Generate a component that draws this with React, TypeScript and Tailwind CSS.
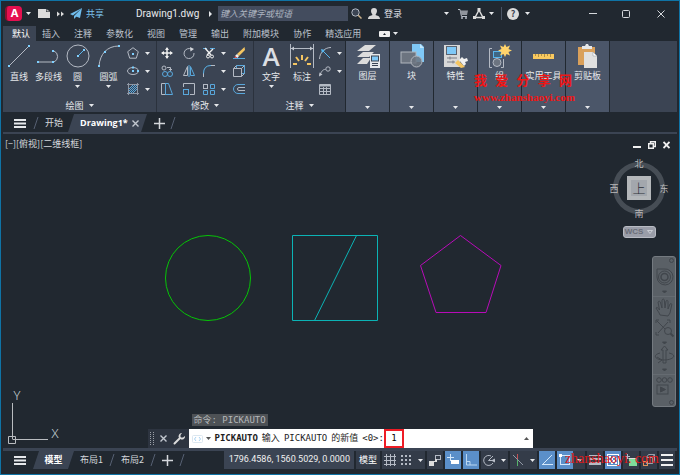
import React from 'react';

const RIBBON_TABS = ['插入', '注释', '参数化', '视图', '管理', '输出', '附加模块', '协作', '精选应用'];

const Caret: React.FC<{ className?: string }> = ({ className = '' }) => (
  <svg width="5" height="3" viewBox="0 0 5 3" className={`shrink-0 fill-[#e6e8eb] ${className}`}>
    <path d="M0 0h5L2.5 3z" />
  </svg>
);

const IconButton: React.FC<{ label: string; className?: string; children: React.ReactNode }> = ({
  label,
  className = '',
  children,
}) => (
  <button type="button" aria-label={label} className={`flex shrink-0 items-center justify-center ${className}`}>
    {children}
  </button>
);

const Icon: React.FC<{ w?: number; h?: number; children: React.ReactNode }> = ({ w = 12, h = 12, children }) => (
  <svg width={w} height={h} viewBox={`0 0 ${w} ${h}`} fill="none" stroke="#b4bac4" className="shrink-0">
    {children}
  </svg>
);

const Slash = () => (
  <svg width="6" height="12" viewBox="0 0 6 12" stroke="#566072" className="shrink-0">
    <path d="M1 12L5 0" />
  </svg>
);

const Bars = () => (
  <svg width="12" height="9" viewBox="0 0 12 9" fill="#e6e8eb">
    <path d="M0 0h12v2H0zM0 3.5h12v2H0zM0 7h12v2H0z" />
  </svg>
);

const Plus = () => (
  <svg width="11" height="11" viewBox="0 0 11 11" stroke="#d5d8dc" strokeWidth="1.5">
    <path d="M5.5 0v11M0 5.5h11" />
  </svg>
);

const Cross = () => (
  <svg width="7" height="7" viewBox="0 0 7 7" stroke="#c3c8d0" strokeWidth="1.4">
    <path d="M.5.5l6 6M6.5.5l-6 6" />
  </svg>
);

const TitleBar = () => (
  <header className="flex h-[25px] items-center pl-1 text-[9px]">
    <button type="button" aria-label="应用程序菜单" className="flex shrink-0 items-center">
      <span className="flex h-[15px] w-[17px] items-center justify-center rounded-sm border-l-2 border-[#8c0f2d] bg-[#e51050] font-['Inter'] text-[11px] font-bold text-white">
        A
      </span>
      <span className="flex w-3 justify-center">
        <Caret />
      </span>
    </button>
    <IconButton label="新建" className="w-5">
      <Icon w={12} h={9}>
        <path d="M0 0h8v3h4v6H0z" fill="#dcdcdc" stroke="none" />
        <path d="M8.500 0L12 2.500H8.500z" fill="#b5b5b5" stroke="none" />
      </Icon>
    </IconButton>
    <IconButton label="更多" className="w-3">
      <Icon w={7} h={6}>
        <path d="M0 .5L3 3 0 5.500zM4 .5L7 3 4 5.500z" fill="#dcdcdc" stroke="none" />
      </Icon>
    </IconButton>
    <button type="button" className="ml-1 flex shrink-0 items-center gap-1 text-[#7cc3ee]">
      <Icon w={12} h={11}>
        <path d="M12 0L0 6l3 1.500zM12 0L4 8v3l2-2zM12 0L6 8.500l4 1.500z" fill="#6fbcec" stroke="none" />
      </Icon>
      共享
    </button>
    <h1 className="ml-8 w-[66px] shrink-0 whitespace-nowrap font-['Roboto'] text-[10px] text-[#e8eaed]">Drawing1.dwg</h1>
    <IconButton label="展开搜索" className="w-4">
      <Icon w={3} h={6}>
        <path d="M0 0l3 3-3 3z" fill="#e6e8eb" stroke="none" />
      </Icon>
    </IconButton>
    <input
      type="search"
      aria-label="搜索"
      placeholder="键入关键字或短语"
      className="h-[15px] w-[130px] shrink-0 bg-[#434c5e] px-[2px] italic outline-none placeholder:text-[#aeb5c1]"
    />
    <IconButton label="搜索" className="w-[17px]">
      <Icon w={11} h={11}>
        <circle cx="4.500" cy="4.500" r="3.700" fill="#3b4453" />
        <path d="M7.200 7.200L10.500 10.500" stroke="#c9b08a" strokeWidth="1.500" />
      </Icon>
    </IconButton>
    <button type="button" className="flex shrink-0 items-center gap-1 pl-[3px] text-[#e0e3e8]">
      <Icon w={12} h={11}>
        <path d="M6 0c2 0 3 1.300 3 3S7.500 6.500 7.500 7c1.500.5 4.500 1 4.500 4H0c0-3 3-3.500 4.500-4C4.500 6.500 3 5 3 3s1-3 3-3z" fill="#d8d8d8" stroke="none" />
      </Icon>
      登录
    </button>
    <div className="ml-auto flex items-center">
      <IconButton label="登录选项" className="w-[14px]">
        <Caret />
      </IconButton>
      <IconButton label="应用商店" className="w-5">
        <Icon w={10} h={10}>
          <path d="M0 .5h2l1.500 7H9" />
          <path d="M2 1.500h8L9 6H3z" fill="#8f949c" stroke="none" />
          <circle cx="4" cy="9" r=".7" />
          <circle cx="8" cy="9" r=".7" />
        </Icon>
      </IconButton>
      <IconButton label="Autodesk 应用" className="w-3">
        <Icon w={12} h={11}>
          <path d="M6 2L2 9.500M6 2l4 7.500M2.500 9.500h7" stroke="#dcdcdc" strokeWidth="1.500" />
          <path d="M4.500 0h3v3h-3zM0 8h3v3H0zM9 8h3v3H9z" fill="#dcdcdc" stroke="none" />
        </Icon>
      </IconButton>
      <IconButton label="应用选项" className="w-3">
        <Caret />
      </IconButton>
      <span className="ml-1 mr-[5px] h-[13px] w-px bg-[#4a5464]" />
      <IconButton label="帮助" className="w-3">
        <span className="flex size-3 items-center justify-center rounded-full bg-[#dcdcdc] text-[9px] font-bold text-[#3b4453]">?</span>
      </IconButton>
      <IconButton label="帮助选项" className="w-4">
        <Caret />
      </IconButton>
      <IconButton label="最小化" className="ml-[41px] h-6 w-[33px]">
        <Icon w={8} h={8}>
          <path d="M0 3.500h8" stroke="#d5d8dc" />
        </Icon>
      </IconButton>
      <IconButton label="最大化" className="h-6 w-[33px]">
        <Icon w={8} h={8}>
          <rect x=".5" y=".5" width="7" height="7" rx="1" stroke="#d5d8dc" />
        </Icon>
      </IconButton>
      <IconButton label="关闭" className="h-6 w-[37px]">
        <Icon w={8} h={8}>
          <path d="M.5.5l7 7M7.500.5l-7 7" stroke="#d5d8dc" />
        </Icon>
      </IconButton>
    </div>
  </header>
);

const RibbonTabs = () => (
  <nav className="flex h-[15px] items-stretch pl-[2px] text-[9px] text-[#bcc2cc]">
    <button type="button" className="mr-[6px] whitespace-nowrap bg-[#3b4453] pl-[9px] pr-[6px] text-white">
      默认
    </button>
    {RIBBON_TABS.map((tab) => (
      <button key={tab} type="button" className="mr-[14px] whitespace-nowrap">
        {tab}
      </button>
    ))}
    <button type="button" aria-label="最小化功能区" className="ml-1 flex items-center gap-[3px]">
      <Icon w={11} h={6}>
        <rect width="11" height="6" rx="1" fill="#f0f0f0" stroke="none" />
        <path d="M4 4h3L5.500 2z" fill="#212830" stroke="none" />
      </Icon>
      <Caret />
    </button>
  </nav>
);

const BigTool: React.FC<{ label: string; className?: string; menu?: boolean; children: React.ReactNode }> = ({
  label,
  className = '',
  menu,
  children,
}) => (
  <button type="button" className={`flex shrink-0 flex-col items-center whitespace-nowrap text-[9px] leading-3 text-[#e6e8eb] ${className}`}>
    <span className="mb-[3px] flex h-6 items-center">{children}</span>
    {label}
    {menu && <Caret className="mt-[2px]" />}
  </button>
);

const PanelTitle: React.FC<{ children: React.ReactNode }> = ({ children }) => (
  <button type="button" className="mt-auto flex h-[13px] items-center justify-center gap-[5px] text-[9px] text-[#e6e8eb]">
    {children}
    <Caret />
  </button>
);

const Dot: React.FC<{ x: number; y: number }> = ({ x, y }) => (
  <rect x={x - 1} y={y - 1} width="2" height="2" fill="#7fd0ff" stroke="none" />
);

const SmallTool: React.FC<{ label: string; menu?: boolean; children: React.ReactNode }> = ({ label, menu, children }) => (
  <div className="flex h-[18px] items-center">
    <IconButton label={label} className="w-3">
      <Icon>{children}</Icon>
    </IconButton>
    {menu && (
      <IconButton label={`${label}选项`} className="h-full w-4">
        <Caret />
      </IconButton>
    )}
  </div>
);

const DrawPanel = () => (
  <section className="flex w-[154px] shrink-0 flex-col border-r border-[#2b323d] bg-[#3b4453] pt-[3px]">
    <div className="flex">
      <BigTool label="直线" className="w-8">
        <Icon w={24} h={24}>
          <path d="M2 22L22 2" />
          <Dot x={2} y={22} />
          <Dot x={22} y={2} />
        </Icon>
      </BigTool>
      <BigTool label="多段线" className="w-[27px]">
        <Icon w={24} h={24}>
          <path d="M1 18h16a6 6 0 0 0 0-11h-1" />
          <Dot x={1} y={18} />
          <Dot x={16} y={18} />
          <Dot x={16} y={7} />
        </Icon>
      </BigTool>
      <BigTool label="圆" menu className="w-[31px]">
        <Icon w={24} h={24}>
          <circle cx="12" cy="12" r="11" />
          <path d="M12 12l6-6" stroke="#59b5ec" />
          <Dot x={12} y={12} />
          <Dot x={18} y={6} />
        </Icon>
      </BigTool>
      <BigTool label="圆弧" menu className="w-[31px]">
        <Icon w={24} h={24}>
          <path d="M2 22C3 10 10 2 22 2" />
          <Dot x={2} y={22} />
          <Dot x={8} y={8} />
          <Dot x={22} y={2} />
        </Icon>
      </BigTool>
      <div className="ml-[3px]">
        <SmallTool label="多边形" menu>
          <path d="M6 .7l5.300 4-2 6.500H2.700l-2-6.500z" />
          <Dot x={6} y={7} />
        </SmallTool>
        <SmallTool label="椭圆" menu>
          <ellipse cx="6" cy="6" rx="5.500" ry="3.500" />
          <Dot x={6} y={6} />
          <Dot x={6} y={2.5} />
          <Dot x={11} y={6} />
        </SmallTool>
        <SmallTool label="图案填充" menu>
          <path d="M1.500 0v12M10.500 0v12M0 1.500h12M0 10.500h12" stroke="#8f97a4" />
          <path d="M2 6l4-4M2 10l8-8M6 10l4-4M4 10l6-6M2 8l6-6" stroke="#59a8dc" />
        </SmallTool>
      </div>
    </div>
    <PanelTitle>绘图</PanelTitle>
  </section>
);

const ModifyPanel = () => (
  <section className="flex w-[97px] shrink-0 flex-col border-r border-[#2b323d] bg-[#3b4453] pt-[3px]">
    <div className="flex pl-1">
      <div className="mr-[10px]">
        <SmallTool label="移动">
          <path d="M6 1v10M1 6h10" stroke="#f0f0f0" strokeWidth="1.500" />
          <path d="M6 0l2 3H4zM6 12l2-3H4zM0 6l3-2v4zM12 6L9 4v4z" fill="#f0f0f0" stroke="none" />
        </SmallTool>
        <SmallTool label="复制">
          <circle cx="3" cy="3" r="2" />
          <circle cx="4" cy="9" r="2.500" stroke="#59a8dc" />
          <circle cx="9" cy="9" r="2.500" stroke="#59a8dc" />
          <path d="M6 2.500h3.500v3M8 4l1.500 1.500L11 4" />
        </SmallTool>
        <SmallTool label="拉伸">
          <path d="M.5 11.500V.5h4v11z" />
          <path d="M4.500.5h3l4 11h-7z" stroke="#59a8dc" />
        </SmallTool>
      </div>
      <div className="mr-2">
        <SmallTool label="旋转">
          <path d="M8.500 2.200A5 5 0 1 0 11 6" />
          <path d="M7 0l4 2-3.500 2.500z" fill="#d5d8dc" stroke="none" />
        </SmallTool>
        <SmallTool label="镜像">
          <path d="M4.500 1.500v9H.5z" />
          <path d="M7.500 1.500v9h4z" stroke="#59a8dc" />
          <path d="M6 0v12" stroke="#59a8dc" />
        </SmallTool>
        <SmallTool label="缩放">
          <path d="M.5 4V.5h11v11H7" />
          <rect x=".5" y="6.500" width="5" height="5" stroke="#59a8dc" />
        </SmallTool>
      </div>
      <div className="mr-[2px]">
        <SmallTool label="修剪" menu>
          <path d="M0 1.500h4M7 1.500h5" stroke="#59a8dc" />
          <path d="M2 1l6 7M10 2L4 8" stroke="#f0f0f0" strokeWidth="1.400" />
          <circle cx="5" cy="9.500" r="1.500" stroke="#f0f0f0" />
          <circle cx="9" cy="9.500" r="1.500" stroke="#f0f0f0" />
        </SmallTool>
        <SmallTool label="圆角" menu>
          <path d="M.5 12V8" />
          <path d="M.5 8.500q0-8 7.500-8" stroke="#59b5ec" />
          <path d="M8 .5h4" />
        </SmallTool>
        <SmallTool label="阵列" menu>
          <rect x=".5" y="1.500" width="4" height="4" />
          <path d="M7.500 1.500h4v4h-4zM.5 7.500h4v4h-4zM7.500 7.500h4v4h-4z" stroke="#59a8dc" />
        </SmallTool>
      </div>
      <div>
        <SmallTool label="删除">
          <path d="M11.500 0L12 3 6 9 4 7z" fill="#f4c562" stroke="none" />
          <path d="M4 7l2 2-1.500 2L2 9z" fill="#f0f0f0" stroke="none" />
          <path d="M2 9l2.500 2H1.500z" fill="#e8504f" stroke="none" />
          <path d="M0 11.500h12" stroke="#59a8dc" />
        </SmallTool>
        <SmallTool label="分解">
          <path d="M3.500 3.500V.5h8v8h-3" stroke="#59a8dc" />
          <path d="M.5 3.500h8v8h-8zM.5 3.500l3-3M8.500 3.500l3-3M8.500 11.500l3-3" />
        </SmallTool>
        <SmallTool label="偏移">
          <path d="M12 1.500H5a4.500 4.500 0 0 0 0 9h7" stroke="#59a8dc" />
          <path d="M12 4.500H6a1.500 1.500 0 0 0 0 3h6" />
        </SmallTool>
      </div>
    </div>
    <PanelTitle>修改</PanelTitle>
  </section>
);

const AnnotatePanel = () => (
  <section className="flex w-[91px] shrink-0 flex-col bg-[#3b4453] pt-[3px]">
    <div className="flex">
      <BigTool label="文字" menu className="ml-px w-8">
        <span className="font-['Open_Sans'] text-[26px] font-semibold leading-6 text-[#dcdfe3]">A</span>
      </BigTool>
      <BigTool label="标注" className="w-[30px]">
        <Icon w={24} h={24}>
          <path d="M.5 0v24M23.500 0v24M1 4.500h22" />
          <path d="M1 4.500l3-2v4zM23 4.500l-3-2v4z" fill="#c3c8d0" stroke="none" />
          <path d="M12 11v5M6 13l3 4M18 13l-3 4M3 20h4M17 20h4" stroke="#f4c562" strokeWidth="2" />
        </Icon>
      </BigTool>
      <div className="ml-[2px]">
        <SmallTool label="引线" menu>
          <path d="M.5 12C1 5 6 .5 12 .5" />
          <path d="M3 3l8 8" stroke="#59b5ec" />
          <path d="M2 2l4 1-3 3z" fill="#59b5ec" stroke="none" />
        </SmallTool>
        <SmallTool label="多重引线" menu>
          <circle cx="9" cy="4" r="2.200" />
          <path d="M6.500 4.500C4 4 2 7 1 10" />
          <path d="M0 11.500l.5-4 3 2z" fill="#c3c8d0" stroke="none" />
        </SmallTool>
        <SmallTool label="表格">
          <path d="M.5 1.500h11v10H.5zM1 5.500h10M1 8.500h10M4.500 4v8M7.500 4v8" />
          <path d="M1 2.500h10" strokeWidth="2" />
        </SmallTool>
      </div>
    </div>
    <PanelTitle>注释</PanelTitle>
  </section>
);

const CollapsedPanel: React.FC<{ label: string; children: React.ReactNode }> = ({ label, children }) => (
  <button
    type="button"
    className="ml-px flex w-[43px] shrink-0 flex-col items-center whitespace-nowrap bg-[#4b5669] pb-[3px] pt-[3px] text-[9px] leading-3 text-[#e6e8eb]"
  >
    <span className="mb-[2px] flex h-6 items-center">
      <Icon w={24} h={24}>
        {children}
      </Icon>
    </span>
    {label}
    <Caret className="mt-auto" />
  </button>
);

const Ribbon = () => (
  <div className="mx-[2px] flex h-[71px] items-stretch">
    <DrawPanel />
    <ModifyPanel />
    <AnnotatePanel />
    <CollapsedPanel label="图层">
      <path d="M9 1h11l-7 6H1zM7 8h11l-5 5H1zM7 14h8l-4 6H1z" fill="#dcdcdc" stroke="none" />
      <rect x="14" y="10" width="10" height="14" fill="#e6e8eb" stroke="none" />
      <rect x="15.500" y="12" width="7" height="5" fill="#7fc8f7" stroke="#3b4453" />
      <path d="M16 19.500h6M16 21.500h6" stroke="#3b4453" />
    </CollapsedPanel>
    <CollapsedPanel label="块">
      <path d="M12 0h9l3 3v15H12z" fill="#7fc8f7" stroke="none" />
      <path d="M20 0v4h4z" fill="#c4e6fb" stroke="none" />
      <rect x="1" y="8" width="15" height="11" fill="#6c7480" stroke="#b0b5bd" />
      <circle cx="16.500" cy="17.500" r="5.500" fill="#6c7480" fillOpacity=".85" stroke="#b0b5bd" />
    </CollapsedPanel>
    <CollapsedPanel label="特性">
      <path d="M0 1h16v22H0z" fill="#d8d8d8" stroke="none" />
      <rect x="2.500" y="2.500" width="10" height="8" fill="#7fc8f7" stroke="#5b6370" />
      <path d="M3 14h10M3 18h8M6 12.500v3M9 16.500v3" stroke="#7a7f88" />
      <path d="M14 16l7 7-4 1-6-5z" fill="#f4c562" stroke="none" />
      <path d="M15 16l3-3 2 2 3-1 1 3-3 1 1 2-2 2z" fill="#f0f0f0" stroke="none" />
    </CollapsedPanel>
    <CollapsedPanel label="组">
      <path d="M4 4.500H1.500v19H4M13 23.500h2.500V15" />
      <rect x="5.500" y="7.500" width="8" height="6" fill="#3f6784" stroke="#59b5ec" />
      <circle cx="9" cy="18.500" r="4" fill="#6c7480" />
      <path d="M17 0l1.500 3L22 1.500 20.500 5 24 6.500 20.500 8 22 11.500 18.500 10 17 13l-1.500-3L12 11.500 13.500 8 10 6.500 13.500 5 12 1.500 15.500 3z" fill="#ffd36b" stroke="none" />
    </CollapsedPanel>
    <CollapsedPanel label="实用工具">
      <rect x="1" y="10" width="21" height="5" fill="#f9c95f" stroke="none" />
      <path d="M3.500 10v2M6.500 10v3M9.500 10v2M12.500 10v3M15.500 10v2M18.500 10v3" stroke="#b08f43" />
    </CollapsedPanel>
    <CollapsedPanel label="剪贴板">
      <path d="M2 3h17v18H2z" fill="#d9a05b" stroke="none" />
      <path d="M6 5V2h3l1-2h2l1 2h3v3z" fill="#e6e8eb" stroke="none" />
      <path d="M8 8h9l4 4v12H8z" fill="#e0e0e0" stroke="none" />
      <path d="M17 8v4h4z" fill="#fff" stroke="#8f949c" strokeWidth=".5" />
    </CollapsedPanel>
    <div className="ml-px flex-1 bg-[#3b4453]" />
  </div>
);

const FileTabs = () => (
  <nav className="mx-[2px] flex h-[22px] items-end border-b-2 border-[#3b4453] text-[9px] text-[#d5d8dc]">
    <IconButton label="文件选项卡菜单" className="h-[18px] w-[34px]">
      <Bars />
    </IconButton>
    <div className="flex h-[18px] items-center">
      <span className="-ml-1">
        <Slash />
      </span>
      <button type="button" className="ml-[6px]">
        开始
      </button>
    </div>
    <div className="ml-[5px] flex h-[18px] w-[79px] shrink-0 items-center bg-[#3b4453] pl-3 [clip-path:polygon(6px_0,100%_0,calc(100%_-_6px)_100%,0_100%)]">
      <button type="button" className="w-[52px] text-left font-['Open_Sans'] font-bold text-white">
        Drawing1*
      </button>
      <IconButton label="关闭 Drawing1" className="h-full">
        <Cross />
      </IconButton>
    </div>
    <div className="flex h-[18px] items-center gap-[5px] pl-[7px]">
      <IconButton label="新图形" className="h-full">
        <Plus />
      </IconButton>
      <Slash />
    </div>
  </nav>
);

const ViewCube = () => (
  <div className="absolute right-[10px] top-6 flex flex-col items-center">
    <svg width="60" height="64" viewBox="0 0 60 64" className="font-['Noto_Sans_CJK_SC',sans-serif] text-[9px]" textAnchor="middle">
      <circle cx="30" cy="30" r="23.500" fill="none" stroke="#464d55" strokeWidth="5" />
      <rect x="18" y="18" width="24" height="24" fill="#b4b7ba" />
      <rect x="22" y="22" width="16" height="16" fill="#a3a7ad" />
      <text x="30" y="35" className="fill-[#2d3138] text-[13px] font-light">上</text>
      <g fill="#b9b9b9">
        <text x="30" y="9">北</text>
        <text x="30" y="59">南</text>
        <text x="5" y="34">西</text>
        <text x="55" y="34">东</text>
      </g>
    </svg>
    <button
      type="button"
      className="mt-1 flex h-3 w-[33px] items-center justify-center gap-1 rounded-[3px] border border-[#b8bbc3] bg-[#9a9da8] font-['Liberation_Sans'] text-[8px] font-bold text-[#6a6e79]"
    >
      WCS
      <svg width="6" height="4" viewBox="0 0 6 4" fill="none" stroke="#c9ccd3">
        <path d="M.5.5h5L3 3.500z" />
      </svg>
    </button>
  </div>
);

const NavigationBar = () => (
  <div className="absolute right-[3px] top-[122px] flex h-[151px] w-6 flex-col items-center rounded-[3px] border border-[#747a80] bg-[#5a6066]">
    <svg width="22" height="149" viewBox="0 0 22 149" fill="none" stroke="#41464c">
      <circle cx="18.500" cy="3.500" r="2" />
      <path d="M4 12h7a8 8 0 1 1-7 8z" />
      <circle cx="11.500" cy="20" r="6" />
      <circle cx="11.500" cy="20" r="3.500" strokeWidth="1.500" />
      <path d="M0 39.500h22M0 117.500h22" stroke="#656b71" />
      <path d="M9.500 34h4l-2 2zM9.500 85h4l-2 2zM9.500 112h4l-2 2z" fill="#41464c" />
      <path d="M7 58c-1-3-3-5-4-7 1-1.500 2 0 3.500 2L5 45c1-1.500 2-.5 2.300 0L9 51V43c1-1.500 2-1 2.300 0L12 51l1-7c1-1.200 2-.5 2 .5L15 52l2-5c1-1 2-.2 1.700 1L17 56l-2 3z" />
      <path d="M4 64l13 13M15 65L5 76M3 63h3M3 63v3M17 63h-3M17 63v3M3 78h3M3 78v-3" />
      <circle cx="15" cy="74" r="3.500" fill="#5a6066" />
      <path d="M17.500 76.500l3 3" strokeWidth="2" />
      <path d="M10 106V93H8l3.500-4 3.500 4h-2v13z" />
      <path d="M7 96c-8 2-5 7 4 7s14-5 5-7M4 100l5 3-4 3" />
      <circle cx="6" cy="123" r="2.300" />
      <circle cx="11.500" cy="123" r="2.300" />
      <circle cx="17" cy="123" r="2.300" />
      <rect x="4" y="128" width="11" height="9" />
      <path d="M7.500 130l5 2.500-5 2.500z" fill="#41464c" />
      <circle cx="18.500" cy="145.500" r="2" />
    </svg>
  </div>
);

const CommandLine = () => (
  <div className="mt-auto flex justify-center">
    <div className="w-[385px] font-['DejaVu_Sans_Mono','Noto_Sans_CJK_SC',monospace] text-[9px]">
      <p className="mb-[3px] ml-11 w-fit bg-[#4d5155] px-[2px] leading-3 text-[#b4b7ba]">命令: PICKAUTO</p>
      <div className="flex h-[19px] items-stretch bg-white">
        <div className="flex w-[41px] shrink-0 items-center justify-between bg-[#2d3440] pl-[2px] pr-1">
          <svg width="4" height="13" viewBox="0 0 4 13" stroke="#9aa0a8" strokeDasharray="1 1">
            <path d="M.5 0v13M3.500 0v13" />
          </svg>
          <IconButton label="关闭命令行">
            <Cross />
          </IconButton>
          <IconButton label="自定义">
            <Icon w={12} h={12}>
              <path d="M1.500 10.500L7 5" stroke="#dcdcdc" strokeWidth="2" strokeLinecap="round" />
              <path d="M9 0L7.500 2v2.500H10L12 3c.3 2.500-1.500 4-4 3.500L5.500 4C5.500 1.500 7 0 9 0z" fill="#dcdcdc" stroke="none" />
            </Icon>
          </IconButton>
        </div>
        <label htmlFor="command" className="flex items-center whitespace-nowrap text-[#1d1d1d]">
          <svg width="11" height="8" viewBox="0 0 11 8" fill="none" stroke="#a9d3f3" className="ml-[3px]">
            <rect x=".5" y=".5" width="10" height="7" rx="1" stroke="#dbe7f0" />
            <path d="M4 2L2.500 4 4 6M7 2l1.500 2L7 6" />
          </svg>
          <svg width="5" height="3" viewBox="0 0 5 3" fill="#555" className="ml-[3px] mr-1">
            <path d="M0 0h5L2.500 3z" />
          </svg>
          <span className="flex gap-1">
            <strong>PICKAUTO</strong>
            <span>输入</span>
            <span>PICKAUTO</span>
            <span>的新值</span>
            <span>&lt;0&gt;:</span>
          </span>
        </label>
        <input id="command" defaultValue="1" className="w-5 border-2 border-[#ee1c25] text-center text-black outline-none" />
        <IconButton label="命令历史" className="ml-auto mr-1">
          <svg width="5" height="3" viewBox="0 0 5 3" fill="#555">
            <path d="M0 3h5L2.500 0z" />
          </svg>
        </IconButton>
      </div>
    </div>
  </div>
);

const DrawingArea = () => (
  <main className="relative flex flex-1 flex-col">
    <div className="flex items-start justify-between pl-1 pr-[9px] pt-[3px]">
      <div className="text-[9px] leading-[13px] text-[#d5d8dc]">[−][俯视][二维线框]</div>
      <div className="flex items-center gap-[7px] pt-1">
        <IconButton label="最小化视口">
          <Icon w={8} h={8}>
            <path d="M0 6h8" stroke="#f0f0f0" strokeWidth="2" />
          </Icon>
        </IconButton>
        <IconButton label="还原视口">
          <Icon w={8} h={8}>
            <path d="M2.500 2V.7h4.800v4.800H6M.7 2.700h4.600v4.600H.7z" stroke="#f0f0f0" strokeWidth="1.400" />
          </Icon>
        </IconButton>
        <IconButton label="关闭视口">
          <Icon w={7} h={8}>
            <path d="M.5 1l6 6M6.500 1l-6 6" stroke="#f0f0f0" strokeWidth="1.800" />
          </Icon>
        </IconButton>
      </div>
    </div>

    {/* Model geometry */}
    <svg width="520" height="200" viewBox="0 0 520 200" fill="none" className="pointer-events-none absolute left-0 top-0">
      <circle cx="207" cy="144" r="42.500" stroke="#06c406" />
      <path d="M291.500 101.500h85v85h-85zM355.500 101.500l-42 85" stroke="#0bb3b5" />
      <path d="M459.500 101.500l40.500 30-15 47h-50l-15.500-47z" stroke="#b80bb8" />
    </svg>

    {/* UCS icon */}
    <svg width="64" height="60" viewBox="0 0 64 60" fill="none" stroke="#b9bcc0" className="pointer-events-none absolute bottom-0 left-0">
      <path d="M11.500 15v36M11.500 51.500H47M7.500 48.500h7v7h-7z" />
      <g fill="#dfe1e4" stroke="none" className="font-['Open_Sans'] text-[13px] font-light" textAnchor="middle">
        <text x="16" y="12">Y</text>
        <text x="54" y="50">X</text>
      </g>
    </svg>

    <ViewCube />
    <NavigationBar />
    <CommandLine />
  </main>
);

const StatusButton: React.FC<{ label: string; on?: boolean; menu?: boolean; children: React.ReactNode }> = ({
  label,
  on,
  menu,
  children,
}) => (
  <button
    type="button"
    aria-label={label}
    className={`flex h-[18px] shrink-0 items-center gap-[6px] px-[2px] ${on ? 'bg-[#5b8fc9]' : 'bg-[#343c49]'}`}
  >
    <Icon w={12} h={12}>
      {children}
    </Icon>
    {menu && <Caret />}
  </button>
);

const StatusBar = () => (
  <footer className="mx-[2px] flex h-[26px] items-start justify-between border-t-[3px] border-[#3b4453] text-[9px] text-[#d5d8dc]">
    <nav className="flex h-[18px] shrink-0 items-center whitespace-nowrap">
      <IconButton label="布局菜单" className="h-full w-[34px]">
        <Bars />
      </IconButton>
      <button
        type="button"
        className="-ml-1 h-full w-[41px] bg-[#3b4453] font-bold text-white [clip-path:polygon(6px_0,100%_0,calc(100%_-_6px)_100%,0_100%)]"
      >
        模型
      </button>
      <button type="button" className="mx-[6px]">布局1</button>
      <Slash />
      <button type="button" className="mx-[6px]">布局2</button>
      <Slash />
      <IconButton label="新建布局" className="mx-[6px] h-full">
        <Plus />
      </IconButton>
      <Slash />
    </nav>
    <div className="flex shrink-0 items-center gap-[2px] whitespace-nowrap pr-[2px]">
      <output className="flex h-[18px] w-[130px] items-center justify-end bg-[#3b4453] pr-1 font-['Roboto'] text-[#f0f0f0]">
        1796.4586, 1560.5029, 0.0000
      </output>
      <button type="button" className="h-[18px] bg-[#343c49] px-[3px] text-white">模型</button>
      <div className="flex">
        <StatusButton label="栅格">
          <path d="M2.500 0v12M6.500 0v12M10.500 0v12M0 2.500h12M0 6.500h12M0 10.500h12" />
        </StatusButton>
        <StatusButton label="捕捉" menu>
          <path d="M2 1v11M6 1v11M10 1v11" strokeWidth="2" strokeDasharray="2 2" />
        </StatusButton>
      </div>
      <StatusButton label="推断约束">
        <rect x="6.500" y="1.500" width="5" height="4" />
        <path d="M0 7h5v5H0zM6 5h2v3H5V7h1z" fill="#dcdcdc" stroke="none" />
      </StatusButton>
      <StatusButton label="动态输入" on>
        <path d="M3.500 0v7M0 3.500h7" stroke="#d4e8fb" />
        <rect x="4" y="6" width="8" height="4" fill="#fff" stroke="none" />
      </StatusButton>
      <StatusButton label="正交" on>
        <path d="M1.500 0v11H12M1.500 7.500H5V11" stroke="#bcd8f3" />
      </StatusButton>
      <StatusButton label="极轴追踪" menu>
        <path d="M10 9A5 5 0 1 1 8 2M5.500 6.500h6M5.500 6.500L10 2" />
        <path d="M9 6.500l3-1.500v3z" fill="#c3c8d0" />
      </StatusButton>
      <StatusButton label="等轴测草图" menu>
        <path d="M1 1l10 10" stroke="#8f97a4" />
        <path d="M5.500 0v5" stroke="#c24f55" />
        <path d="M5.500 6v6" stroke="#57b36b" />
      </StatusButton>
      <StatusButton label="对象捕捉追踪" on>
        <path d="M1 10.500h11M2 10L11 1" stroke="#d4e8fb" />
      </StatusButton>
      <div className="flex">
        <StatusButton label="对象捕捉" on>
          <rect x="1.500" y="1.500" width="9" height="9" stroke="#d4e8fb" />
          <path d="M0 0h3v3H0z" fill="#fff" stroke="none" />
        </StatusButton>
        <IconButton label="对象捕捉选项" className="h-[18px] w-3 bg-[#343c49]">
          <Caret />
        </IconButton>
      </div>
      <StatusButton label="线宽">
        <path d="M0 1.500h12" />
        <path d="M0 5h12" strokeWidth="2" />
        <path d="M0 9.500h12" strokeWidth="3" />
      </StatusButton>
      <StatusButton label="透明度" on>
        <rect x=".5" y=".5" width="11" height="11" stroke="#fff" />
        <path d="M2 3h8M2 7h8" stroke="#fff" strokeWidth="2" strokeDasharray="2 2" />
        <path d="M4 5h6M4 9h6" stroke="#fff" strokeWidth="2" strokeDasharray="2 2" />
      </StatusButton>
      <StatusButton label="选择循环">
        <path d="M2.500 0v5M0 2.500h5" />
        <path d="M3.500 4.500h8" stroke="#dcdcdc" />
        <rect x="4" y="5" width="8" height="7" fill="#7fdc9b" stroke="none" />
      </StatusButton>
      <StatusButton label="三维对象捕捉">
        <path d="M3.500 3.500h6v6h-6zM3.500 3.500l2-3h6v6l-2 3M9.500 3.500l2-3" stroke="#9aa1ac" />
        <rect x=".5" y="7.500" width="4" height="4" stroke="#e0925c" />
      </StatusButton>
      <StatusButton label="自定义">
        <path d="M0 1h12M0 6h12M0 11h12" stroke="#f0f0f0" strokeWidth="2" />
      </StatusButton>
    </div>
  </footer>
);

const Watermark = () => (
  <div className="pointer-events-none absolute left-[473px] top-[70px] text-[#f01515]">
    <div className="flex w-[98px] justify-between text-[13px] font-bold leading-[18px]">
      {'我爱分享网'.split('').map((char) => (
        <span key={char}>{char}</span>
      ))}
    </div>
    <div className="font-['Liberation_Serif'] text-[11px] font-bold leading-4">www.zhanshaoyi.com</div>
  </div>
);

export default function App() {
  return (
    <div className="relative flex min-h-screen flex-col overflow-hidden border border-[#0f73a5] bg-[#212830] font-['Noto_Sans_CJK_SC',sans-serif]">
      <TitleBar />
      <RibbonTabs />
      <Ribbon />
      <FileTabs />
      <DrawingArea />
      <StatusBar />
      <Watermark />
      <div className="pointer-events-none absolute bottom-[6px] right-5 font-['Liberation_Serif'] text-[14px] leading-[18px] text-[#e01818]">
        zhanshaoyi. com
      </div>
    </div>
  );
}
